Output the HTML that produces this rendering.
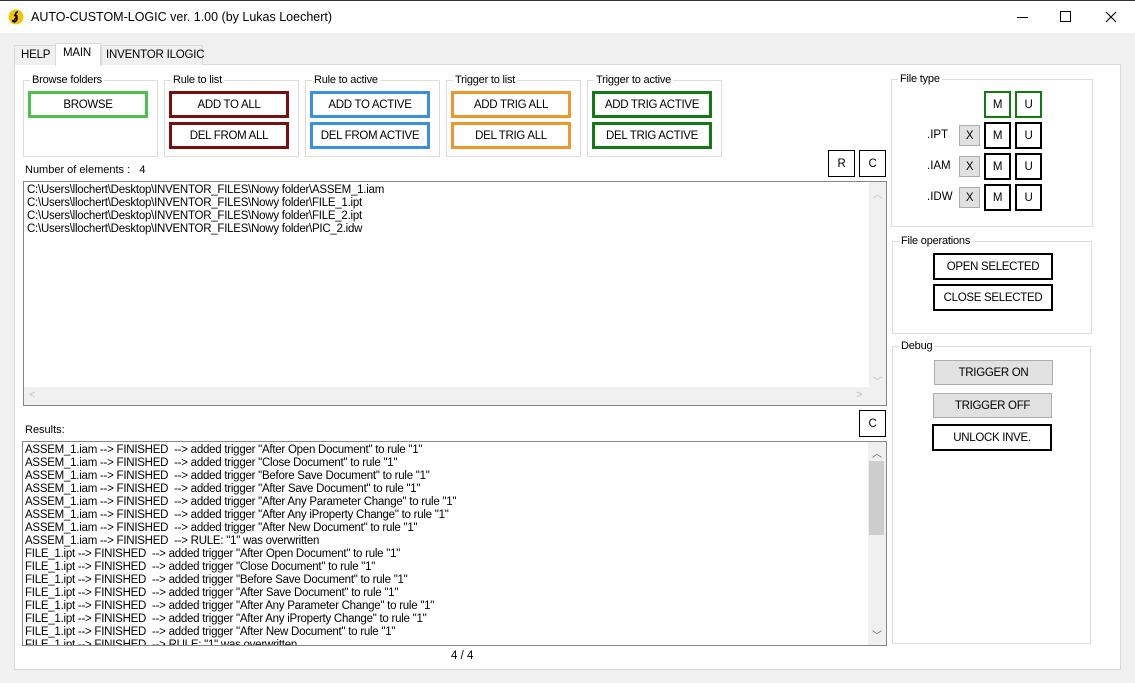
<!DOCTYPE html>
<html><head><meta charset="utf-8"><style>
*{box-sizing:border-box;margin:0;padding:0}
body{width:1135px;height:683px;background:#f0f0f0;font-family:"Liberation Sans",Arial,sans-serif;font-size:11.5px;color:#000;position:relative;overflow:hidden}
.a{position:absolute}
.tb{left:0;top:0;width:1135px;height:33px;background:#fff;border-top:1px solid #333}
.page{left:14px;top:64px;width:1107px;height:606px;background:#fff;border:1px solid #d9d9d9}
.tab{top:45px;height:20px;background:#f0f0f0;border:1px solid #d9d9d9;border-bottom:none;padding:3px 0 0 6px;font-size:11.5px;white-space:nowrap;letter-spacing:-0.2px}
.grp{border:1px solid #dcdcdc}
.lg{background:#fff;padding:0 2px;font-size:11px;top:-7px;left:6px;position:absolute;line-height:13px;letter-spacing:-0.2px;white-space:nowrap}
.btn{display:flex;align-items:center;justify-content:center;background:#fff;font-size:11.5px;letter-spacing:-0.3px;white-space:nowrap}
.b3{border:3px solid}
.list{border:1px solid #828790;background:#fff}
.ln{line-height:13px;white-space:nowrap;letter-spacing:-0.25px}
.gb{background:#e1e1e1;border:1px solid #adadad}
</style></head><body>
<div class="a tb">
 <svg class="a" style="left:8px;top:8px" width="16" height="16" viewBox="0 0 16 16"><circle cx="8" cy="8" r="7.5" fill="#f2c500"/><path d="M10 3c-3 0-3 3-1 4l-4 6M6 6c3 1 4 4 2 6s-4 0-3-1" stroke="#000" stroke-width="1.5" fill="none"/></svg>
 <div class="a" style="left:31px;top:9px;font-size:12.5px">AUTO-CUSTOM-LOGIC ver. 1.00 (by Lukas Loechert)</div>
 <div class="a" style="left:1017px;top:16px;width:11px;height:1px;background:#000"></div>
 <div class="a" style="left:1060px;top:10px;width:11px;height:11px;border:1px solid #000"></div>
 <svg class="a" style="left:1105px;top:10px" width="12" height="12" viewBox="0 0 12 12"><path d="M1 1L11 11M11 1L1 11" stroke="#000" stroke-width="1.1"/></svg>
</div>
<div class="a page"></div>
<div class="a tab" style="left:14px;width:42px">HELP</div>
<div class="a tab" style="left:101px;width:102px;padding-left:4px">INVENTOR ILOGIC</div>
<div class="a tab" style="left:55px;top:43px;height:23px;width:46px;background:#fff;padding:3px 0 0 7px">MAIN</div>

<div class="a grp" style="left:23px;top:80px;width:135px;height:77px"><span class="lg">Browse folders</span></div>
<div class="a grp" style="left:164px;top:80px;width:135px;height:77px"><span class="lg">Rule to list</span></div>
<div class="a grp" style="left:305px;top:80px;width:135px;height:77px"><span class="lg">Rule to active</span></div>
<div class="a grp" style="left:446px;top:80px;width:135px;height:77px"><span class="lg">Trigger to list</span></div>
<div class="a grp" style="left:587px;top:80px;width:135px;height:77px"><span class="lg">Trigger to active</span></div>

<div class="a btn b3" style="left:28px;top:91px;width:120px;height:27px;border-color:#4cc24c">BROWSE</div>
<div class="a btn b3" style="left:169px;top:91px;width:120px;height:27px;border-color:#7b0f0f">ADD TO ALL</div>
<div class="a btn b3" style="left:169px;top:122px;width:120px;height:27px;border-color:#7b0f0f">DEL FROM ALL</div>
<div class="a btn b3" style="left:310px;top:91px;width:120px;height:27px;border-color:#3a8fe0">ADD TO ACTIVE</div>
<div class="a btn b3" style="left:310px;top:122px;width:120px;height:27px;border-color:#3a8fe0">DEL FROM ACTIVE</div>
<div class="a btn b3" style="left:451px;top:91px;width:120px;height:27px;border-color:#f0962a">ADD TRIG ALL</div>
<div class="a btn b3" style="left:451px;top:122px;width:120px;height:27px;border-color:#f0962a">DEL TRIG ALL</div>
<div class="a btn b3" style="left:592px;top:91px;width:120px;height:27px;border-color:#137a13">ADD TRIG ACTIVE</div>
<div class="a btn b3" style="left:592px;top:122px;width:120px;height:27px;border-color:#137a13">DEL TRIG ACTIVE</div>

<div class="a" style="left:25px;top:164px;font-size:11px">Number of elements :&nbsp;&nbsp; 4</div>
<div class="a btn" style="left:828px;top:150px;width:27px;height:27px;border:1px solid #000">R</div>
<div class="a btn" style="left:859px;top:150px;width:27px;height:27px;border:1px solid #000">C</div>

<div class="a list" style="left:23px;top:181px;width:864px;height:225px">
 <div class="a ln" style="left:3px;top:2px">C:\Users\llochert\Desktop\INVENTOR_FILES\Nowy folder\ASSEM_1.iam<br>C:\Users\llochert\Desktop\INVENTOR_FILES\Nowy folder\FILE_1.ipt<br>C:\Users\llochert\Desktop\INVENTOR_FILES\Nowy folder\FILE_2.ipt<br>C:\Users\llochert\Desktop\INVENTOR_FILES\Nowy folder\PIC_2.idw</div>
 <div class="a" style="left:845px;top:0;width:17px;height:205px;background:#f0f0f0;color:#c0c0c0;font-size:10px;text-align:center"><div style="margin-top:4px">︿</div><div style="margin-top:172px">﹀</div></div>
 <div class="a" style="left:0;top:205px;width:862px;height:18px;background:#f0f0f0;color:#c0c0c0;font-size:11px"><span class="a" style="left:5px;top:2px">&lt;</span><span class="a" style="left:832px;top:2px">&gt;</span></div>
</div>

<div class="a" style="left:25px;top:424px;font-size:11px">Results:</div>
<div class="a btn" style="left:859px;top:410px;width:27px;height:27px;border:1px solid #000">C</div>
<div class="a list" style="left:22px;top:441px;width:865px;height:205px;overflow:hidden">
 <div class="a ln" style="left:2px;top:2px">ASSEM_1.iam --&gt; FINISHED&nbsp; --&gt; added trigger "After Open Document" to rule "1"<br>ASSEM_1.iam --&gt; FINISHED&nbsp; --&gt; added trigger "Close Document" to rule "1"<br>ASSEM_1.iam --&gt; FINISHED&nbsp; --&gt; added trigger "Before Save Document" to rule "1"<br>ASSEM_1.iam --&gt; FINISHED&nbsp; --&gt; added trigger "After Save Document" to rule "1"<br>ASSEM_1.iam --&gt; FINISHED&nbsp; --&gt; added trigger "After Any Parameter Change" to rule "1"<br>ASSEM_1.iam --&gt; FINISHED&nbsp; --&gt; added trigger "After Any iProperty Change" to rule "1"<br>ASSEM_1.iam --&gt; FINISHED&nbsp; --&gt; added trigger "After New Document" to rule "1"<br>ASSEM_1.iam --&gt; FINISHED&nbsp; --&gt; RULE: "1" was overwritten<br>FILE_1.ipt --&gt; FINISHED&nbsp; --&gt; added trigger "After Open Document" to rule "1"<br>FILE_1.ipt --&gt; FINISHED&nbsp; --&gt; added trigger "Close Document" to rule "1"<br>FILE_1.ipt --&gt; FINISHED&nbsp; --&gt; added trigger "Before Save Document" to rule "1"<br>FILE_1.ipt --&gt; FINISHED&nbsp; --&gt; added trigger "After Save Document" to rule "1"<br>FILE_1.ipt --&gt; FINISHED&nbsp; --&gt; added trigger "After Any Parameter Change" to rule "1"<br>FILE_1.ipt --&gt; FINISHED&nbsp; --&gt; added trigger "After Any iProperty Change" to rule "1"<br>FILE_1.ipt --&gt; FINISHED&nbsp; --&gt; added trigger "After New Document" to rule "1"<br>FILE_1.ipt --&gt; FINISHED&nbsp; --&gt; RULE: "1" was overwritten</div>
 <div class="a" style="left:845px;top:0;width:18px;height:203px;background:#f0f0f0;color:#606060;font-size:10px;text-align:center"><div style="margin-top:3px">︿</div><div class="a" style="left:1px;top:19px;width:15px;height:74px;background:#cdcdcd"></div><div style="margin-top:167px">﹀</div></div>
</div>
<div class="a" style="left:451px;top:650px">4 / 4</div>

<div class="a grp" style="left:891px;top:79px;width:202px;height:148px"><span class="lg">File type</span></div>
<div class="a btn b3" style="left:984px;top:91px;width:27px;height:27px;border-color:#137a13;border-width:2px">M</div>
<div class="a btn b3" style="left:1015px;top:91px;width:27px;height:27px;border-color:#137a13;border-width:2px">U</div>
<div class="a" style="left:927px;top:129px">.IPT</div>
<div class="a" style="left:927px;top:160px">.IAM</div>
<div class="a" style="left:927px;top:191px">.IDW</div>
<div class="a btn gb" style="left:959px;top:125px;width:21px;height:21px">X</div>
<div class="a btn gb" style="left:959px;top:156px;width:21px;height:21px">X</div>
<div class="a btn gb" style="left:959px;top:187px;width:21px;height:21px">X</div>
<div class="a btn" style="left:984px;top:122px;width:27px;height:27px;border:2px solid #000">M</div>
<div class="a btn" style="left:1015px;top:122px;width:27px;height:27px;border:2px solid #000">U</div>
<div class="a btn" style="left:984px;top:153px;width:27px;height:27px;border:2px solid #000">M</div>
<div class="a btn" style="left:1015px;top:153px;width:27px;height:27px;border:2px solid #000">U</div>
<div class="a btn" style="left:984px;top:184px;width:27px;height:27px;border:2px solid #000">M</div>
<div class="a btn" style="left:1015px;top:184px;width:27px;height:27px;border:2px solid #000">U</div>

<div class="a grp" style="left:892px;top:241px;width:200px;height:93px"><span class="lg">File operations</span></div>
<div class="a btn" style="left:933px;top:253px;width:120px;height:27px;border:2px solid #000">OPEN SELECTED</div>
<div class="a btn" style="left:933px;top:284px;width:120px;height:27px;border:2px solid #000">CLOSE SELECTED</div>

<div class="a grp" style="left:892px;top:346px;width:199px;height:298px"><span class="lg">Debug</span></div>
<div class="a btn gb" style="left:934px;top:360px;width:119px;height:25px">TRIGGER ON</div>
<div class="a btn gb" style="left:933px;top:393px;width:119px;height:25px">TRIGGER OFF</div>
<div class="a btn" style="left:932px;top:424px;width:120px;height:27px;border:2px solid #000">UNLOCK INVE.</div>
</body></html>
